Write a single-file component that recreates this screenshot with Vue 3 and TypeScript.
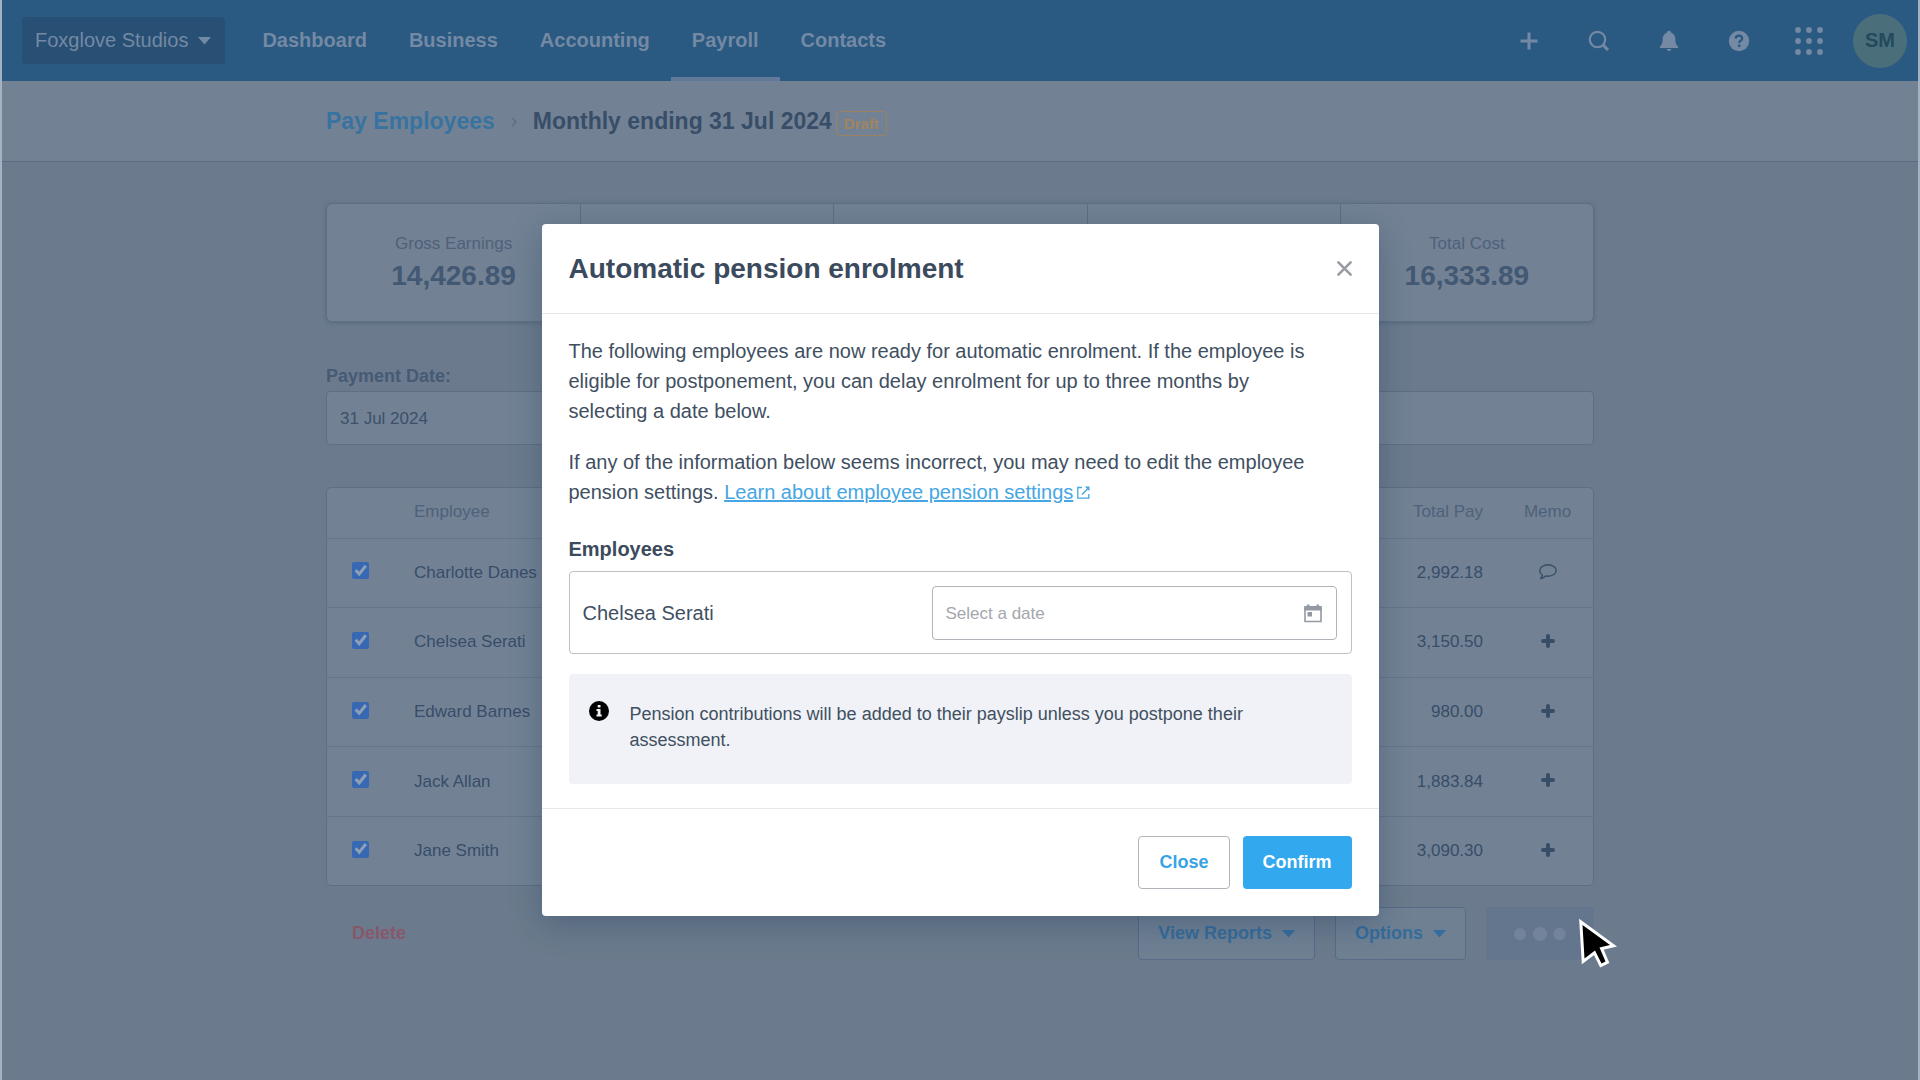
<script setup lang="ts">
import { ref } from 'vue'

interface Employee {
  id: number
  name: string
  total: string
  hasMemo: boolean
  selected: boolean
}

interface Summary {
  label: string
  value: string
}

const navItems: string[] = ['Dashboard', 'Business', 'Accounting', 'Payroll', 'Contacts']
const activeNav = ref('Payroll')

const summaries: Summary[] = [
  { label: 'Gross Earnings', value: '14,426.89' },
  { label: '', value: '' },
  { label: '', value: '' },
  { label: '', value: '' },
  { label: 'Total Cost', value: '16,333.89' },
]

const employees = ref<Employee[]>([
  { id: 1, name: 'Charlotte Danes', total: '2,992.18', hasMemo: true, selected: true },
  { id: 2, name: 'Chelsea Serati', total: '3,150.50', hasMemo: false, selected: true },
  { id: 3, name: 'Edward Barnes', total: '980.00', hasMemo: false, selected: true },
  { id: 4, name: 'Jack Allan', total: '1,883.84', hasMemo: false, selected: true },
  { id: 5, name: 'Jane Smith', total: '3,090.30', hasMemo: false, selected: true },
])

const paymentDate = ref('31 Jul 2024')
const postponeDate = ref('')
</script>

<template>
  <div class="page">
    <header class="topbar">
      <button class="org" type="button">
        Foxglove Studios
        <svg width="13" height="8" viewBox="0 0 13 8" aria-hidden="true"><path d="M0 0h13L6.500 7.500z" fill="currentColor" /></svg>
      </button>
      <nav class="nav">
        <a v-for="item in navItems" :key="item" href="#" :class="{ active: item === activeNav }">{{ item }}</a>
      </nav>
      <div class="tools">
        <button type="button" aria-label="Create new">
          <svg width="18" height="18" viewBox="0 0 18 18"><path d="M9 .5v17M.5 9h17" stroke="currentColor" stroke-width="3" fill="none" /></svg>
        </button>
        <button type="button" aria-label="Search">
          <svg width="22" height="22" viewBox="0 0 22 22"><circle cx="9.500" cy="9.500" r="7.700" stroke="currentColor" stroke-width="2.200" fill="none" /><path d="M15 15l5 5" stroke="currentColor" stroke-width="3" fill="none" /></svg>
        </button>
        <button type="button" aria-label="Notifications">
          <svg width="20" height="22" viewBox="0 0 20 22"><path d="M10 .8c1.300 0 2.200.8 2.300 1.900 2.500.9 4 3 4 5.800 0 4.500.7 6 2.700 8V18H1v-1.500c2-2 2.700-3.500 2.700-8 0-2.800 1.500-4.900 4-5.800C7.800 1.600 8.700.8 10 .8zM7.800 19h4.400c0 1.200-1 2-2.200 2s-2.200-.8-2.200-2z" fill="currentColor" /></svg>
        </button>
        <button type="button" aria-label="Help">
          <svg width="22" height="22" viewBox="0 0 22 22"><circle cx="11" cy="11" r="10.200" fill="currentColor" /><path d="M7.800 8.600c0-1.900 1.300-3 3.200-3s3.200 1.100 3.200 2.800c0 2.300-3 2.300-3 4.700" fill="none" stroke="#2a5982" stroke-width="2.200" /><rect x="10" y="14.500" width="2.400" height="2.400" fill="#2a5982" /></svg>
        </button>
        <button type="button" aria-label="Apps">
          <svg width="28" height="28" viewBox="0 0 28 28" fill="currentColor">
            <template v-for="r in 3" :key="r"><circle v-for="c in 3" :key="c" :cx="c * 11 - 8" :cy="r * 11 - 8" r="2.900" /></template>
          </svg>
        </button>
        <button class="avatar" type="button">SM</button>
      </div>
    </header>

    <div class="subheader">
      <div class="container crumbs">
        <a href="#">Pay Employees</a>
        <svg width="6" height="10" viewBox="0 0 6 10" aria-hidden="true"><path d="M1 1l4 4-4 4" fill="none" stroke="#5c6f85" stroke-width="1.500" /></svg>
        <h1>Monthly ending 31 Jul 2024</h1>
        <span class="tag">Draft</span>
      </div>
    </div>

    <main class="container main">
      <section class="summary">
        <div v-for="(s, i) in summaries" :key="i" class="stat">
          <span class="stat-label">{{ s.label }}</span>
          <strong class="stat-value">{{ s.value }}</strong>
        </div>
      </section>

      <div class="field">
        <label for="payment-date">Payment Date:</label>
        <div class="field-box">
          <input id="payment-date" v-model="paymentDate" type="text" />
        </div>
      </div>

      <div class="table-card">
        <table>
          <thead>
            <tr>
              <th class="check"></th>
              <th class="name">Employee</th>
              <th class="pay">Total Pay</th>
              <th class="memo">Memo</th>
            </tr>
          </thead>
          <tbody>
            <tr v-for="e in employees" :key="e.id">
              <td class="check"><input v-model="e.selected" type="checkbox" :aria-label="e.name" /></td>
              <td class="name">{{ e.name }}</td>
              <td class="pay">{{ e.total }}</td>
              <td class="memo">
                <button type="button" :aria-label="e.hasMemo ? 'View memo' : 'Add memo'">
                  <svg v-if="e.hasMemo" width="18" height="18" viewBox="0 -2 18 18"><path d="M9 .8c4.600 0 8.200 2.500 8.200 5.700S13.600 12.200 9 12.200c-.9 0-1.700-.1-2.500-.3-1.300 1.300-2.800 2.300-4.900 2.700 1-1 1.600-2.200 1.700-3.500C1.700 10 .8 8.400.8 6.500.8 3.300 4.400.8 9 .8z" fill="none" stroke="currentColor" stroke-width="1.400" stroke-linejoin="round" /></svg>
                  <svg v-else width="14" height="14" viewBox="0 0 14 14"><path d="M7 2v10M2 7h10" fill="none" stroke="currentColor" stroke-width="4" stroke-linecap="round" /></svg>
                </button>
              </td>
            </tr>
          </tbody>
        </table>
      </div>

      <div class="actions">
        <button class="delete" type="button">Delete</button>
        <button class="outline" type="button">
          View Reports
          <svg width="13" height="8" viewBox="0 0 13 8" aria-hidden="true"><path d="M0 0h13L6.500 7.500z" fill="currentColor" /></svg>
        </button>
        <button class="outline" type="button">
          Options
          <svg width="13" height="8" viewBox="0 0 13 8" aria-hidden="true"><path d="M0 0h13L6.500 7.500z" fill="currentColor" /></svg>
        </button>
        <button class="loading" type="button" aria-label="Loading">
          <svg width="52" height="14" viewBox="0 0 52 14" fill="currentColor"><circle cx="6" cy="7" r="6" /><circle cx="26" cy="7" r="7" /><circle cx="45.500" cy="7" r="6.200" /></svg>
        </button>
        <svg class="pointer" width="42" height="56" viewBox="0 0 42 56" aria-hidden="true">
          <path d="M4.500 9L32 29 21.500 31.500 27.500 45.500 23.500 47.500 17 34.500 6.500 42.500z" fill="#000" stroke="#fff" stroke-width="6" paint-order="stroke" />
        </svg>
      </div>
    </main>

    <div class="overlay">
      <section class="modal" role="dialog" aria-modal="true" aria-labelledby="modal-title">
        <header class="modal-head">
          <h2 id="modal-title">Automatic pension enrolment</h2>
          <button class="dismiss" type="button" aria-label="Dismiss">
            <svg width="15" height="15" viewBox="0 0 16 16"><path d="M1.500 1.500l13 13M14.500 1.500l-13 13" stroke="currentColor" stroke-width="2.800" stroke-linecap="round" fill="none" /></svg>
          </button>
        </header>
        <div class="modal-body">
          <p>The following employees are now ready for automatic enrolment. If the employee is eligible for postponement, you can delay enrolment for up to three months by selecting a date below.</p>
          <p>
            If any of the information below seems incorrect, you may need to edit the employee pension settings.
            <a href="#" class="learn"><span>Learn about employee pension settings</span><svg width="13" height="13" viewBox="0 0 13 13" aria-hidden="true"><path d="M5 1.500H.8v10.700h11V8" fill="none" stroke="currentColor" stroke-width="1.300" /><path d="M5 8.500L11 2.500" fill="none" stroke="currentColor" stroke-width="1.500" /><path d="M7.800.5h4.700v4.700z" fill="currentColor" /></svg></a>
          </p>
          <h3>Employees</h3>
          <div class="enrol">
            <label for="postpone">Chelsea Serati</label>
            <div class="date">
              <input id="postpone" v-model="postponeDate" type="text" placeholder="Select a date" />
              <svg width="18" height="19" viewBox="0 0 18 19" aria-hidden="true"><path d="M1 4v13.500h16V4" fill="none" stroke="currentColor" stroke-width="1.600" /><path d="M.2 2H3V.5h2.500V2h7V.5H15V2h2.800v4.500H.2z" fill="currentColor" /><rect x="3.500" y="8" width="4.500" height="4.500" fill="currentColor" /></svg>
            </div>
          </div>
          <div class="info">
            <svg width="20" height="20" viewBox="0 0 20 20" aria-hidden="true"><circle cx="10" cy="10" r="10" fill="#000" /><path d="M8.700 4h2.800v2.500H8.700zM7.500 8h4v5.500h1.200v2H7.500v-2h1.200V10H7.500z" fill="#f0f2f7" /></svg>
            <span>Pension contributions will be added to their payslip unless you postpone their assessment.</span>
          </div>
        </div>
        <footer class="modal-foot">
          <button class="close" type="button">Close</button>
          <button class="confirm" type="button">Confirm</button>
        </footer>
      </section>
    </div>
  </div>
</template>

<style>
body {
  margin: 0;
  background: #6b7b8d;
}
</style>

<style scoped>
.page,
.page * {
  box-sizing: border-box;
}

.page {
  min-height: 100vh;
  background: #6b7b8d;
  border-left: 2px solid #a3b1c1;
  border-right: 2px solid #a3b1c1;
  font-family: "Liberation Sans", Arial, sans-serif;
  color: #374d68;
  font-size: 17px;
}

button,
input {
  font: inherit;
  color: inherit;
}

button {
  margin: 0;
  padding: 0;
  border: 0;
  background: none;
  cursor: pointer;
}

svg {
  display: block;
  flex: none;
}

.container {
  width: 100%;
  max-width: 1268px;
  margin: 0 auto;
}

.topbar {
  height: 81px;
  padding: 0 11px 0 20px;
  display: flex;
  align-items: center;
  background: #2a5982;
  color: #7489a3;
  font-size: 20px;
}

.org {
  height: 47px;
  padding: 0 14px 0 13px;
  display: flex;
  align-items: center;
  gap: 10px;
  border-radius: 4px;
  background: #284f74;
}

.nav {
  align-self: stretch;
  margin-left: 16px;
  display: flex;
}

.nav a {
  padding: 0 21px;
  display: flex;
  align-items: center;
  border-top: 4px solid transparent;
  border-bottom: 4px solid transparent;
  color: inherit;
  font-weight: bold;
  text-decoration: none;
}

.nav a.active {
  border-bottom-color: #62799a;
}

.tools {
  margin-left: auto;
  display: flex;
  align-items: center;
}

.tools button {
  width: 70px;
  height: 54px;
  display: flex;
  align-items: center;
  justify-content: center;
}

.tools .avatar {
  width: 54px;
  margin-left: 9px;
  border-radius: 50%;
  background: #4a6f7b;
  color: #234a5c;
  font-weight: bold;
}

.subheader {
  height: 81px;
  background: #728294;
  border-bottom: 1px solid #5a6c81;
}

.crumbs {
  height: 81px;
  display: flex;
  align-items: center;
  font-size: 23px;
  font-weight: bold;
}

.crumbs a {
  margin-right: 16px;
  color: #3873a0;
  text-decoration: none;
}

h1 {
  margin: 0 4px 0 16px;
  font-size: 23px;
}

.tag {
  height: 25px;
  margin-top: 4px;
  padding: 0 7px;
  border: 1px solid #9a8262;
  border-radius: 4px;
  color: #9f8561;
  font-size: 15px;
  line-height: 24px;
}

.main {
  padding-top: 41px;
}

.summary {
  height: 119px;
  display: grid;
  grid-template-columns: repeat(5, 1fr);
  border: 1px solid #5d6f84;
  border-radius: 6px;
  background: #728294;
  box-shadow: 0 1px 4px rgba(50, 70, 95, 0.35);
}

.stat {
  padding-top: 28px;
  display: flex;
  flex-direction: column;
  align-items: center;
  color: #4e617a;
}

.stat + .stat {
  border-left: 1px solid #5d6f84;
}

.stat-label {
  line-height: 24px;
}

.stat-value {
  color: #435873;
  font-size: 28px;
  line-height: 40px;
}

.field {
  margin-top: 42px;
  display: flex;
  flex-direction: column;
}

.field label {
  margin-bottom: 3px;
  color: #465a74;
  font-size: 18px;
  font-weight: bold;
  line-height: 24px;
}

.field-box {
  height: 54px;
  display: flex;
  border: 1px solid #5d6f84;
  border-radius: 4px;
  background: #728294;
}

.field input {
  width: 200px;
  padding: 2px 13px 0;
  border: 0;
  outline: 0;
  background: none;
  color: #3b506b;
}

.table-card {
  margin-top: 42px;
  border: 1px solid #5d6f84;
  border-radius: 5px;
  background: #728294;
}

table {
  width: 100%;
  height: 397px;
  border-collapse: collapse;
}

th {
  height: 50px;
  padding: 0 0 2px;
  color: #4e617a;
  font-weight: normal;
  text-align: left;
}

td {
  padding: 0;
  border-top: 1px solid #64768a;
}

.check {
  width: 87px;
  padding: 0 0 4px 25px;
}

.pay {
  padding-right: 19px;
  text-align: right;
}

.memo {
  width: 91px;
  text-align: center;
}

td.memo {
  padding-bottom: 3px;
}

.memo button {
  width: 24px;
  height: 24px;
  display: inline-flex;
  align-items: center;
  justify-content: center;
  vertical-align: middle;
}

.check input {
  appearance: none;
  width: 17px;
  height: 17px;
  margin: 0;
  display: block;
  border-radius: 2px;
  background: #7a8a9c;
}

.check input:checked {
  background: #3768b4;
}

.check input:checked::before {
  content: "";
  width: 17px;
  height: 17px;
  display: block;
  background: #8fa0b6;
  clip-path: polygon(15% 52%, 28% 40%, 42% 55%, 74% 14%, 88% 26%, 43% 82%);
}

.actions {
  position: relative;
  margin-top: 21px;
  display: flex;
  color: #366c9b;
  font-size: 18px;
  font-weight: bold;
}

.delete {
  height: 53px;
  margin-right: auto;
  padding: 0 26px;
  color: #87576a;
}

.outline {
  height: 53px;
  margin-right: 20px;
  padding: 0 19px;
  display: flex;
  align-items: center;
  gap: 10px;
  border: 1px solid #566b86;
  border-radius: 4px;
  background: #6f8093;
}

.loading {
  width: 108px;
  height: 53px;
  padding-left: 28px;
  border-radius: 4px;
  background: #64768d;
  color: #72839a;
}

.pointer {
  position: absolute;
  right: -26px;
  top: 9px;
  z-index: 3;
}

.overlay {
  position: absolute;
  top: 0;
  left: 0;
  right: 0;
  padding-top: 224px;
  display: flex;
  justify-content: center;
}

.modal {
  width: 837px;
  border-radius: 4px;
  background: #fff;
  box-shadow: 0 8px 32px rgba(20, 45, 80, 0.3);
  color: #404f61;
  font-size: 20px;
}

.modal-head {
  height: 90px;
  padding: 0 27px;
  display: flex;
  align-items: center;
  justify-content: space-between;
  border-bottom: 1px solid #e6e8eb;
}

h2 {
  margin: 0;
  color: #3b4a5c;
  font-size: 28px;
}

.dismiss {
  color: #999da3;
}

.modal-body {
  padding: 22px 27px 24px;
}

p {
  margin: 0 0 21px;
  padding-right: 32px;
  line-height: 30px;
}

.learn {
  color: #45a6e3;
  text-decoration: none;
  white-space: nowrap;
}

.learn span {
  text-decoration: underline;
  text-decoration-thickness: 2px;
}

.learn svg {
  margin-left: 4px;
  display: inline-block;
}

h3 {
  margin: 0 0 7px;
  color: #3b4a5c;
  font-size: 20px;
  line-height: 30px;
}

.modal-body p + h3 {
  margin-top: 27px;
}

.enrol {
  padding: 14px 14px 13px 13px;
  display: flex;
  align-items: center;
  justify-content: space-between;
  border: 1px solid #bdc0c7;
  border-radius: 4px;
}

.date {
  width: 405px;
  height: 54px;
  padding-right: 14px;
  display: flex;
  align-items: center;
  border: 1px solid #b0b3ba;
  border-radius: 4px;
  color: #939aa3;
}

.date input {
  min-width: 0;
  flex: 1;
  padding: 2px 13px 0;
  border: 0;
  outline: 0;
  background: none;
  font-size: 17px;
}

.date input::placeholder {
  color: #a3a7ad;
  opacity: 1;
}

.info {
  min-height: 110px;
  margin-top: 20px;
  padding: 27px 20px;
  display: flex;
  gap: 21px;
  border-radius: 4px;
  background: #f0f2f7;
  color: #404f61;
  font-size: 18px;
  line-height: 26px;
}

.modal-foot {
  padding: 27px;
  display: flex;
  justify-content: flex-end;
  gap: 13px;
  border-top: 1px solid #e6e8eb;
  font-size: 18px;
  font-weight: bold;
}

.modal-foot button {
  height: 53px;
  padding: 0 20px;
  border-radius: 4px;
}

.modal-foot .close {
  border: 1px solid #b0b3b9;
  color: #38a3e4;
}

.modal-foot .confirm {
  background: #32a8ee;
  color: #fff;
}
</style>
